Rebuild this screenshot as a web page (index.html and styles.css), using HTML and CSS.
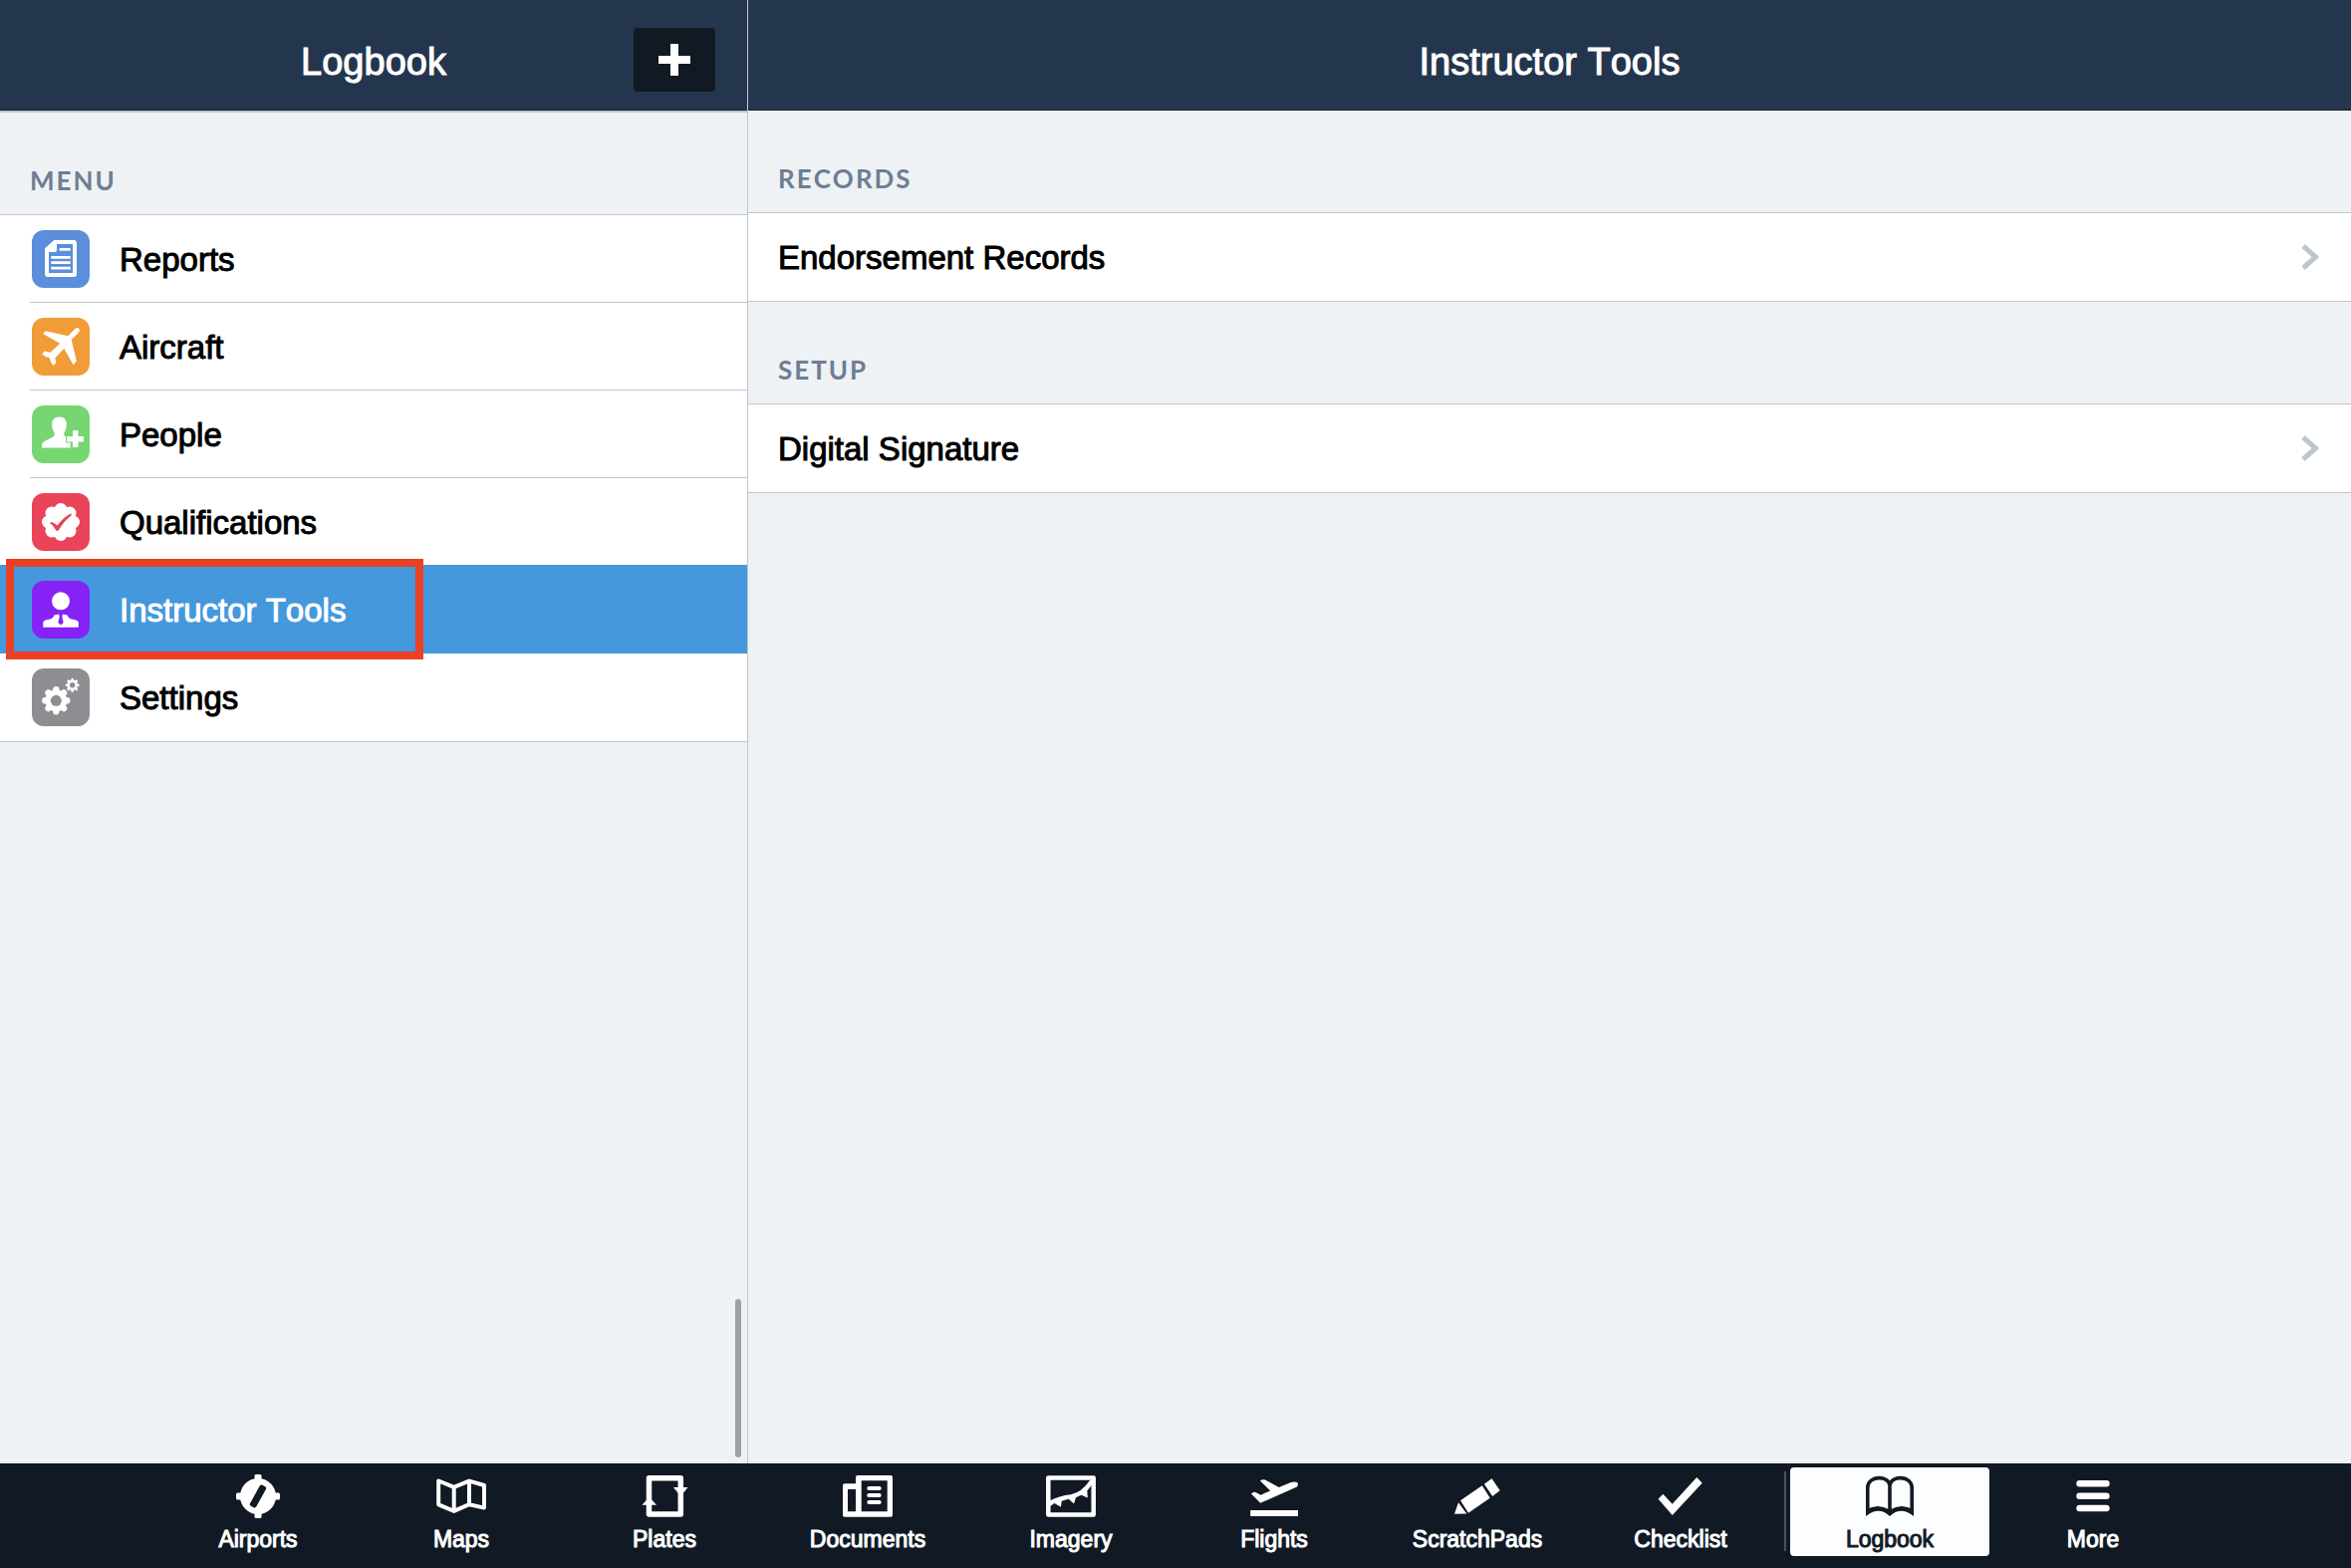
FILE: index.html
```html
<!DOCTYPE html>
<html lang="en">
<head>
    <meta charset="UTF-8">
    <meta name="viewport" content="width=device-width, initial-scale=1.0">
    <title>Logbook - Instructor Tools</title>
    <link rel="stylesheet" href="styles.css">
</head>
<body>
    <div class="panes">
        <aside class="sidebar">
            <header class="topbar">
                <h1>Logbook</h1>
                <button type="button" class="add-button" aria-label="Add entry">
                    <svg viewBox="0 0 32 32" width="32" height="32"><path d="M12 0h8v12h12v8H20v12h-8V20H0v-8h12z"/></svg>
                </button>
            </header>
            <nav class="menu">
                <h2>MENU</h2>
                <ul>
                    <li>
                        <a href="#reports">
                            <svg class="menu-icon blue" viewBox="0 0 58 58">
                                <path fill-rule="evenodd" d="M22.3 10H42a3 3 0 0 1 3 3v31a3 3 0 0 1-3 3H16a3 3 0 0 1-3-3V18.3zM25 14v6a2 2 0 0 1-2 2h-6v21h24V14z"/>
                                <path d="M27.7 18h11v2.7h-11zM19.3 26h19.4v2.7H19.3zM19.3 31.3h19.4V34H19.3zM19.3 36.7h19.4v2.7H19.3z"/>
                            </svg>
                            <span>Reports</span>
                        </a>
                    </li>
                    <li>
                        <a href="#aircraft">
                            <svg class="menu-icon orange" viewBox="0 0 58 58">
                                <path d="M36.3 18.3L43.6 10.8Q45.6 9.2 47.3 10.8Q48.8 12.5 47.2 14.4L39.7 21.9L44.9 43.6L41.6 47.2L32.3 31L23.4 40.2L24.2 45.4L21.6 47.9Q18.8 45.5 17.7 40.3Q13 39.5 10 36.3L12.8 33.6L18.5 34.8L28.3 25.7L11 16L13.8 13.2z"/>
                            </svg>
                            <span>Aircraft</span>
                        </a>
                    </li>
                    <li>
                        <a href="#people">
                            <svg class="menu-icon green" viewBox="0 0 58 58">
                                <path d="M27.5 11.6C32.5 11.6 35 15 34.8 19.5C34.6 24 33.6 25.6 32.3 27.3C32 29.5 32.5 30.8 34 31.4V37.5H38.7V42.4H10V39.7C10 37 13 35.5 17 33.7C21 32 23.2 31.2 22.8 27.3C21.3 25.6 20.4 24 20.2 19.5C20 15 22.5 11.6 27.5 11.6z"/>
                                <path d="M41 25h5.500v6H52v5.400h-5.500V42H41v-5.600h-6V31h6z"/>
                            </svg>
                            <span>People</span>
                        </a>
                    </li>
                    <li>
                        <a href="#qualifications">
                            <svg class="menu-icon red" viewBox="0 0 58 58">
                                <circle cx="29" cy="29" r="15"/>
                                <circle cx="29" cy="16.5" r="6.5"/><circle cx="29" cy="41.5" r="6.5"/>
                                <circle cx="16.5" cy="29" r="6.5"/><circle cx="41.5" cy="29" r="6.5"/>
                                <circle cx="20" cy="20" r="6.5"/><circle cx="38" cy="20" r="6.5"/>
                                <circle cx="20" cy="38" r="6.5"/><circle cx="38" cy="38" r="6.5"/>
                                <path class="hole" d="M18 29.8L20 29Q23 30 25.5 32.6Q31 24.5 39.5 20.2L39.6 22.5Q33 27 26.5 37.8H24.5Q22 33 18 29.8z"/>
                            </svg>
                            <span>Qualifications</span>
                        </a>
                    </li>
                    <li class="selected">
                        <a href="#instructor" aria-current="page">
                            <svg class="menu-icon purple" viewBox="0 0 58 58">
                                <circle cx="29" cy="20.3" r="9"/>
                                <path d="M22.5 34.5L27 33.6L27.7 36L26.3 42L29 44.5L31.7 42L30.3 36L31 33.6L35.5 34.5Q36.5 37.5 39.5 38.6Q46.8 39.5 46.8 42V46.8H11.3V42Q11.3 39.5 18.5 38.6Q21.5 37.5 22.5 34.5z"/>
                            </svg>
                            <span>Instructor Tools</span>
                        </a>
                        <div class="callout"></div>
                    </li>
                    <li>
                        <a href="#settings">
                            <svg class="menu-icon grey" viewBox="0 0 58 58">
                                <circle cx="24.3" cy="32.3" r="11"/>
                                <path class="teeth" d="M24.3 21.3v22M13.3 32.3h22M16.5 24.5l15.6 15.6M32.1 24.5L16.5 40.1"/>
                                <circle class="hole" cx="24.3" cy="32.3" r="5.5"/>
                                <circle cx="40.7" cy="16.7" r="5"/>
                                <path class="teeth small" d="M40.7 11.2v11M35.2 16.7h11M36.8 12.8l7.8 7.8M44.6 12.8l-7.8 7.8"/>
                                <circle class="hole" cx="40.7" cy="16.7" r="2.7"/>
                            </svg>
                            <span>Settings</span>
                        </a>
                    </li>
                </ul>
            </nav>
            <div class="scroll-thumb"></div>
        </aside>

        <main class="detail">
            <header class="topbar">
                <h1>Instructor Tools</h1>
            </header>
            <section>
                <h2>RECORDS</h2>
                <a class="detail-row" href="#endorsements">
                    <span>Endorsement Records</span>
                    <svg class="chevron" viewBox="0 0 18 26"><path d="M2 2l12.500 11L2 24"/></svg>
                </a>
            </section>
            <section>
                <h2>SETUP</h2>
                <a class="detail-row" href="#signature">
                    <span>Digital Signature</span>
                    <svg class="chevron" viewBox="0 0 18 26"><path d="M2 2l12.500 11L2 24"/></svg>
                </a>
            </section>
        </main>
    </div>

    <nav class="tabbar">
        <a class="tab" href="#airports">
            <svg viewBox="0 0 50 44">
                <circle cx="25" cy="22" r="18"/>
                <path d="M23 0h4q1.500 0 1.500 1.500V42.500q0 1.500-1.500 1.500h-4q-1.500 0-1.500-1.500V1.500Q21.500 0 23 0z"/>
                <path d="M3 20v4q0 1.500 1.500 1.500h41q1.500 0 1.500-1.500v-4q0-1.500-1.500-1.500h-41Q3 18.500 3 20z"/>
                <rect class="cut" x="21.5" y="10" width="7" height="24" rx="2" transform="rotate(29 25 22)"/>
            </svg>
            <span>Airports</span>
        </a>
        <a class="tab" href="#maps">
            <svg viewBox="0 0 50 44">
                <path class="line" stroke-width="4" d="M2.2 6.5L17.7 12.8L33 6.6L48 11V33.6L33 30.2L17.7 36.9L2.2 30.3zM17.7 12.8v24M33 6.6v23.6"/>
            </svg>
            <span>Maps</span>
        </a>
        <a class="tab" href="#plates">
            <svg viewBox="0 0 50 44">
                <rect class="line" stroke-width="5.5" x="9.5" y="3.7" width="31.8" height="36.3"/>
                <path d="M34 13h14.500l-7.200 9zM2.500 30.700H17l-7.200-8z"/>
            </svg>
            <span>Plates</span>
        </a>
        <a class="tab" href="#documents">
            <svg viewBox="0 0 50 44">
                <path fill-rule="evenodd" d="M15 1h33q2 0 2 2v37.700q0 2-2 2H2q-2 0-2-2V11.300q0-2 2-2h11V3q0-2 2-2zM18.700 6.300v31h26v-31zM5 15v22.300h8V15z"/>
                <path class="line" stroke-width="4" stroke-linecap="round" d="M26.300 14h10.400M26.300 21h10.400M26.300 28h10.400"/>
            </svg>
            <span>Documents</span>
        </a>
        <a class="tab" href="#imagery">
            <svg viewBox="0 0 50 44">
                <rect class="line" stroke-width="4.5" x="2.3" y="3.6" width="45.4" height="36.8"/>
                <path d="M4 26.3Q13 21.5 25 20.2Q36 18 44 6h2v4.500L41.3 16.5L41.8 23.5L35.3 20.7L30 23.3L28 29.5L22.7 24.7L15.7 26.7L15 32.7L8.3 29L4 32.2z"/>
            </svg>
            <span>Imagery</span>
        </a>
        <a class="tab" href="#flights">
            <svg viewBox="0 0 50 44">
                <path d="M1.2 36H49v6H1.2z"/>
                <path d="M2 19.5Q3.5 17.5 6 17.7L11.6 20.7L21.2 16.4L10.9 6.5Q13 4.5 16 5.5L29.8 13L42 8Q47 6.8 48.6 8.5Q49.5 11 47.5 12.8L11.2 28.8z"/>
            </svg>
            <span>Flights</span>
        </a>
        <a class="tab" href="#scratchpads">
            <svg viewBox="0 0 50 44">
                <path d="M6 28.3L14.3 39.4L2 39.8zM8 26.3L29.8 11.3L37.7 23.7L16 38.7zM31.9 9.7L39.5 4.3L47.7 16.3L40.2 22z"/>
            </svg>
            <span>ScratchPads</span>
        </a>
        <a class="tab" href="#checklist">
            <svg viewBox="0 0 50 44">
                <path d="M2.6 24.7L7.4 19.7L16.7 29.7L41.2 3L46.7 8.7L16.7 41z"/>
            </svg>
            <span>Checklist</span>
        </a>
        <div class="divider"></div>
        <a class="tab active" href="#logbook" aria-current="page">
            <svg viewBox="0 0 50 44">
                <path class="line" stroke-width="3.6" d="M2.8 38V13C3.5 0.8 23.5 0.8 25 11C26.5 0.8 46.5 0.8 47.2 13V38M25 10v30"/>
                <path d="M1 42V35.5Q13 28.5 25 35.5Q37 28.5 49 35.5V42Q36 31.5 25 42Q14 31.5 1 42z"/>
            </svg>
            <span>Logbook</span>
        </a>
        <a class="tab" href="#more">
            <svg viewBox="0 0 50 44">
                <path class="line" stroke-width="6.4" stroke-linecap="round" d="M11.5 9.3h27M11.5 21.7h27M11.5 34h27"/>
            </svg>
            <span>More</span>
        </a>
    </nav>
</body>
</html>
```

FILE: styles.css
```css
* {
    box-sizing: border-box;
}
body {
    margin: 0;
    min-height: 100vh;
    display: flex;
    flex-direction: column;
    font-family: "Liberation Sans", Arial, sans-serif;
    font-kerning: none;
    background-color: #eef2f5;
    color: #000;
}
a {
    color: inherit;
    text-decoration: none;
}
.panes {
    flex: 1;
    display: flex;
}
.sidebar {
    position: relative;
    flex: 0 0 751px;
    border-right: 1px solid #bec6d2;
}
.detail {
    flex: 1;
}

/* top bars */
.topbar {
    display: flex;
    align-items: center;
    justify-content: center;
    height: 111px;
    padding-top: 13px;
    background-color: #24364e;
    border-bottom: 1px solid #152030;
    color: white;
}
.topbar h1 {
    margin: 0;
    font-size: 38px;
    font-weight: normal;
    line-height: 44px;
    -webkit-text-stroke: 1px;
}
.sidebar .topbar {
    position: relative;
}
.add-button {
    position: absolute;
    top: 28px;
    right: 32px;
    display: flex;
    align-items: center;
    justify-content: center;
    width: 82px;
    height: 64px;
    padding: 0;
    border: none;
    border-radius: 4px;
    background-color: #111923;
    fill: white;
    cursor: pointer;
}

/* section headings */
h2 {
    margin: 0;
    padding: 52px 30px 18px;
    font-family: Lato, "Open Sans", sans-serif;
    font-size: 26px;
    font-weight: bold;
    line-height: 32px;
    letter-spacing: 2px;
    color: #6d7e92;
}

/* sidebar menu */
.menu {
    border-top: 2px solid #bec6d2;
}
.menu ul {
    margin: 0;
    padding: 0;
    list-style: none;
    background-color: white;
    border-top: 1px solid #bec6d2;
    border-bottom: 1px solid #bec6d2;
}
.menu li {
    position: relative;
    height: 88px;
    padding-left: 30px;
}
.menu a {
    display: flex;
    align-items: center;
    gap: 30px;
    height: 88px;
    padding-left: 2px;
    border-bottom: 1px solid #bec6d2;
    font-size: 33px;
    -webkit-text-stroke: 1px;
}
.menu a span,
.detail-row span {
    padding-top: 2px;
}
.menu li:last-child a,
.menu .selected a {
    border-bottom-color: transparent;
}
.menu .selected {
    margin-top: -1px;
    padding-top: 1px;
    height: 89px;
    background-color: #4598dc;
    color: white;
}
.menu-icon {
    flex: none;
    width: 58px;
    height: 58px;
    border-radius: 12px;
    fill: white;
    -webkit-text-stroke: 0;
}
.blue { background-color: #5b8edb; }
.orange { background-color: #f09c38; }
.green { background-color: #77d672; }
.red { background-color: #e9445a; }
.purple { background-color: #8522f5; }
.grey { background-color: #8e8d92; }
.red .hole { fill: #e9445a; }
.grey .hole { fill: #8e8d92; }
.teeth {
    stroke: white;
    stroke-width: 6.4;
    stroke-linecap: round;
}
.teeth.small {
    stroke-width: 3;
}
.callout {
    position: absolute;
    z-index: 1;
    top: -6px;
    bottom: -6px;
    left: 6px;
    width: 419px;
    border: 8px solid #ea4126;
}
.scroll-thumb {
    position: absolute;
    right: 6px;
    bottom: 6px;
    width: 6px;
    height: 159px;
    border-radius: 3px;
    background-color: #9d9fa1;
}

/* detail rows */
.detail-row {
    display: flex;
    align-items: center;
    justify-content: space-between;
    height: 90px;
    padding: 0 32px 0 30px;
    background-color: white;
    border-top: 1px solid #bec6d2;
    border-bottom: 1px solid #bec6d2;
    font-size: 33px;
    -webkit-text-stroke: 1px;
}
.chevron {
    width: 18px;
    height: 26px;
    fill: none;
    stroke: #bdc6cf;
    stroke-width: 5;
}

/* bottom tabs */
.tabbar {
    display: flex;
    justify-content: center;
    gap: 4px;
    height: 105px;
    padding-top: 4px;
    background-color: #111924;
    color: white;
}
.tab {
    flex: 0 1 200px;
    display: flex;
    flex-direction: column;
    align-items: center;
    gap: 6px;
    height: 89px;
    padding-top: 7px;
    border-radius: 4px;
    font-size: 23px;
    line-height: 30px;
    -webkit-text-stroke: 1px;
}
.tab svg {
    width: 50px;
    height: 44px;
    fill: currentColor;
}
.tab .line {
    fill: none;
    stroke: currentColor;
    stroke-linejoin: round;
}
.tab .cut {
    fill: #111924;
}
.tab.active {
    background-color: #fcfdfe;
    color: #111924;
}
.divider {
    width: 2px;
    height: 80px;
    margin-top: 4px;
    background-color: #4a505a;
}
```
